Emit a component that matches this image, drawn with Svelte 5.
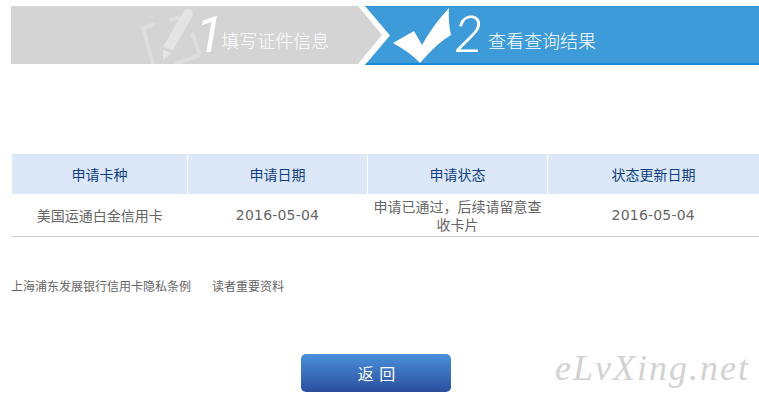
<script>
	const columns = ['申请卡种', '申请日期', '申请状态', '状态更新日期'];
	const row = ['美国运通白金信用卡', '2016-05-04', '申请已通过，后续请留意查收卡片', '2016-05-04'];
</script>

<div class="page">
	<div class="steps">
		<div class="step done">
			<svg class="icon pencil" width="60" height="58" viewBox="0 0 60 58">
				<path d="M14 18 L2 22 L12 58 M28 14 L39 11 M51 27 L59 49 L34 58" fill="none" stroke="#dedede" stroke-width="4" />
				<path d="M22 41 L43 5 Q46 1 50 4 Q53 7 51 11 L32 44 Z" fill="#e4e4e4" />
				<path d="M22 44 L22 54 L31 47 Z" fill="#e4e4e4" />
			</svg>
			<span class="num">1</span>
			<span class="label">填写证件信息</span>
		</div>
		<div class="step active">
			<svg class="icon" width="66" height="56" viewBox="0 0 66 56">
				<path d="M0 36 L21 24 L29 38 Q40 18 56 1 Q55 16 58 28 Q44 36 27 56 Q18 46 0 36 Z" fill="#fff" />
			</svg>
			<span class="num two">2</span>
			<span class="label">查看查询结果</span>
		</div>
	</div>

	<table>
		<thead>
			<tr>
				{#each columns as col}
					<th>{col}</th>
				{/each}
			</tr>
		</thead>
		<tbody>
			<tr>
				{#each row as cell, i}
					<td class:date={i % 2 === 1}>{cell}</td>
				{/each}
			</tr>
		</tbody>
	</table>

	<div class="links">
		<span>上海浦东发展银行信用卡隐私条例</span>
		<span>读者重要资料</span>
	</div>

	<div class="actions">
		<button type="button">返 回</button>
	</div>

	<div class="watermark">eLvXing.net</div>
</div>

<style>
	:global(body) {
		margin: 0;
		background: #fff;
	}

	.page {
		position: relative;
		width: 759px;
		height: 403px;
		overflow: hidden;
		font-family: 'Noto Sans CJK SC', 'DejaVu Sans', sans-serif;
		color: #666;
	}

	.steps {
		display: flex;
		margin-left: 11px;
		padding-top: 6px;
	}

	.step {
		display: flex;
		align-items: center;
		height: 58px;
		color: #fff;
	}

	.step.done {
		width: 371px;
		flex: none;
		padding-left: 130px;
		box-sizing: border-box;
		background: #d4d4d4;
		clip-path: polygon(0 0, 347px 0, 371px 50%, 347px 100%, 0 100%);
	}

	.step.active {
		flex: 1;
		margin-left: -17px;
		padding-left: 28px;
		background: #3e9bd9;
		border-top: 1px solid #2f92d6;
		border-bottom: 2px solid #1a88d4;
		height: 56px;
		clip-path: polygon(0 0, 100% 0, 100% 100%, 0 100%, 25px 50%);
	}

	.icon {
		flex: none;
	}

	.pencil {
		margin-right: -5px;
	}

	.num {
		font-family: Roboto, 'Liberation Sans', sans-serif;
		font-style: italic;
		font-weight: 400;
		font-size: 50px;
		line-height: 1;
		margin-right: -2px;
	}

	.num.two {
		margin-left: -4px;
		margin-right: 6px;
		font-weight: 300;
	}

	.label {
		font-size: 18px;
		font-weight: 300;
		margin-top: 9px;
	}

	table {
		width: 747px;
		margin: 89px 0 0 12px;
		border-collapse: collapse;
		table-layout: fixed;
	}

	th {
		height: 40px;
		padding: 0;
		background: #dce8f8;
		border-left: 1px solid #fff;
		color: #0f3f7f;
		font-size: 14px;
		font-weight: 400;
	}

	th:first-child {
		width: 175px;
		border-left: 0;
	}

	th:nth-child(2),
	th:nth-child(3) {
		width: 179px;
	}

	td {
		height: 42px;
		padding: 0 4px;
		box-sizing: border-box;
		border-bottom: 1px solid #ccc;
		font-size: 14px;
		line-height: 18px;
		text-align: center;
		color: #666;
	}

	td.date {
		padding-top: 1px;
		font-family: 'DejaVu Sans', sans-serif;
		letter-spacing: 0.2px;
	}

	.links {
		display: flex;
		gap: 21px;
		margin: 40px 0 0 11px;
		font-size: 12px;
		line-height: 18px;
		color: #666;
	}

	.actions {
		display: flex;
		margin: 59px 0 0 301px;
	}

	button {
		width: 150px;
		height: 38px;
		border: 0;
		border-radius: 5px;
		background: linear-gradient(#4a90dc, #2a4f9c);
		color: #fff;
		font: 16px 'Noto Sans CJK SC', sans-serif;
		letter-spacing: 1px;
		text-indent: 2px;
		padding: 0;
	}

	.watermark {
		position: absolute;
		left: 555px;
		top: 347px;
		font-family: 'Liberation Serif', serif;
		font-style: italic;
		font-size: 36px;
		letter-spacing: 2px;
		color: #d2d2d2;
	}
</style>
